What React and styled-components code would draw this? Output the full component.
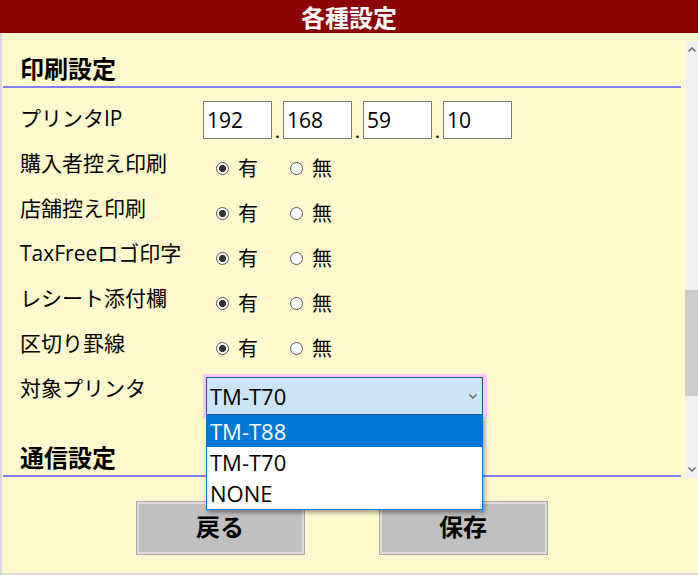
import styled, { createGlobalStyle } from "styled-components";

const GlobalStyle = createGlobalStyle`
  html, body {
    margin: 0;
    padding: 0;
  }
  body {
    background: #fffacd;
    color: #000;
    font-family: "Open Sans", "Noto Sans CJK JP", sans-serif;
  }
`;

const Header = styled.header`
  height: 33px;
  background: #8b0000;
  color: #fff;
  display: flex;
  align-items: center;
  justify-content: center;
  font: bold 24px/26px "Noto Sans CJK JP", sans-serif;
`;

const Main = styled.main`
  height: 542px;
  box-sizing: border-box;
  padding-top: 8px;
  background: #fffacd;
  border-left: 2px solid #d8d8e4;
  border-bottom: 2px solid #dcdcdc;
  display: flex;
  flex-direction: column;
`;

const ScrollArea = styled.div`
  height: 437px;
  display: flex;
`;

const Content = styled.div`
  flex: 1;
`;

const SectionTitle = styled.h2`
  margin: ${(p) => (p.$first ? "0 4px 12px 1px" : "15px 4px 0 1px")};
  padding: 12px 0 3px 17px;
  font: bold 24px/30px "Noto Sans CJK JP", sans-serif;
  border-bottom: 2px solid #8080ff;
`;

const Row = styled.div`
  height: 45px;
  padding-left: 18px;
  display: flex;
  align-items: flex-start;
`;

const Label = styled.div`
  width: 183px;
  flex-shrink: 0;
  font-size: 21px;
  line-height: 36px;
`;

const IpFields = styled.div`
  display: flex;
  margin-top: 1px;
`;

const IpInput = styled.input`
  width: 69px;
  height: 38px;
  box-sizing: border-box;
  margin: 0;
  padding: 0 0 0 3px;
  border: 1px solid #7a7a7a;
  background: #fff;
  color: #000;
  font: 21px "Open Sans", sans-serif;
  outline: none;
`;

const Dot = styled.span`
  width: 11px;
  align-self: flex-end;
  text-align: center;
  font-size: 20px;
  line-height: 16px;
`;

const RadioGroup = styled.div`
  height: 26px;
  margin-top: 10px;
  padding-left: 13px;
  display: flex;
  align-items: center;
`;

const RadioOption = styled.label`
  width: 74px;
  display: flex;
  align-items: center;
  gap: 9px;
  font: 20px/26px "Noto Sans CJK JP", sans-serif;
`;

const Radio = styled.input.attrs({ type: "radio" })`
  appearance: none;
  margin: 0;
  width: 13px;
  height: 13px;
  box-sizing: border-box;
  border: 1px solid #555;
  border-radius: 50%;
  background: #fff;

  &:checked {
    background: radial-gradient(circle, #333 0 3.3px, #fff 3.8px);
  }
`;

const SelectWrap = styled.div`
  position: relative;
  margin-top: 4px;
  padding: 3px 4px 4px 3px;
  background: #ffc6ff;
`;

const SelectBox = styled.div`
  width: 277px;
  height: 38px;
  box-sizing: border-box;
  padding: 0 5px 0 3px;
  border: 1px solid #1e5a96;
  background: #cce4f7;
  display: flex;
  align-items: center;
  justify-content: space-between;
  font-size: 22px;
`;

const Listbox = styled.ul`
  position: absolute;
  top: 41px;
  left: 3px;
  z-index: 2;
  width: 277px;
  box-sizing: border-box;
  margin: 0;
  padding: 0;
  list-style: none;
  background: #fff;
  border: 1px solid #0078d7;
  box-shadow: 2px 3px 4px rgba(0, 0, 0, 0.35);
`;

const Option = styled.li`
  height: 31px;
  padding-left: 3px;
  font-size: 22px;
  line-height: 31px;
  background: ${(p) => (p.$active ? "#0078d7" : "transparent")};
  color: ${(p) => (p.$active ? "#fff" : "#000")};
`;

const Scrollbar = styled.div`
  width: 13px;
  background: #f0f0f0;
  display: flex;
  flex-direction: column;
`;

const ScrollArrow = styled.div`
  height: 17px;
  display: flex;
  align-items: center;
  justify-content: center;
`;

const ScrollTrack = styled.div`
  flex: 1;
  padding-top: 232px;
`;

const Thumb = styled.div`
  height: 106px;
  background: #cdcdcd;
`;

const ButtonBar = styled.div`
  padding: 23px 17px 0 0;
  display: flex;
  justify-content: center;
  gap: 74px;
`;

const Button = styled.button`
  width: 169px;
  height: 54px;
  padding: 0 0 5px;
  background: #c0c0c0;
  border: 1px solid #a9a9a9;
  box-shadow: inset 0 0 0 2px #dcdcdc;
  color: #000;
  font: bold 24px "Noto Sans CJK JP", sans-serif;
`;

const Chevron = ({ up }) => (
  <svg width="8" height="5" viewBox="0 0 8 5">
    <polyline
      points={up ? "0.5,4.5 4,1 7.5,4.5" : "0.5,0.5 4,4 7.5,0.5"}
      fill="none"
      stroke="#606060"
      strokeWidth="1.4"
    />
  </svg>
);

const toggles = [
  { key: "buyer", label: "購入者控え印刷" },
  { key: "store", label: "店舗控え印刷" },
  { key: "logo", label: "TaxFreeロゴ印字" },
  { key: "receipt", label: "レシート添付欄" },
  { key: "rule", label: "区切り罫線" },
];

const ip = ["192", "168", "59", "10"];
const printers = ["TM-T88", "TM-T70", "NONE"];

const App = () => {
  return (
    <>
      <GlobalStyle />
      <Header>各種設定</Header>
      <Main>
        <ScrollArea>
          <Content>
            <SectionTitle $first>印刷設定</SectionTitle>
            <Row>
              <Label>プリンタIP</Label>
              <IpFields>
                {ip.map((v, i) => (
                  <span key={i} style={{ display: "contents" }}>
                    {i > 0 && <Dot>.</Dot>}
                    <IpInput defaultValue={v} />
                  </span>
                ))}
              </IpFields>
            </Row>
            {toggles.map((t) => (
              <Row key={t.key}>
                <Label>{t.label}</Label>
                <RadioGroup>
                  <RadioOption>
                    <Radio name={t.key} defaultChecked />
                    有
                  </RadioOption>
                  <RadioOption>
                    <Radio name={t.key} />
                    無
                  </RadioOption>
                </RadioGroup>
              </Row>
            ))}
            <Row>
              <Label>対象プリンタ</Label>
              <SelectWrap>
                <SelectBox>
                  TM-T70
                  <Chevron />
                </SelectBox>
                <Listbox>
                  {printers.map((p, i) => (
                    <Option key={p} $active={i === 0}>
                      {p}
                    </Option>
                  ))}
                </Listbox>
              </SelectWrap>
            </Row>
            <SectionTitle>通信設定</SectionTitle>
          </Content>
          <Scrollbar>
            <ScrollArrow>
              <Chevron up />
            </ScrollArrow>
            <ScrollTrack>
              <Thumb />
            </ScrollTrack>
            <ScrollArrow>
              <Chevron />
            </ScrollArrow>
          </Scrollbar>
        </ScrollArea>
        <ButtonBar>
          <Button>戻る</Button>
          <Button>保存</Button>
        </ButtonBar>
      </Main>
    </>
  );
};

export default App;
